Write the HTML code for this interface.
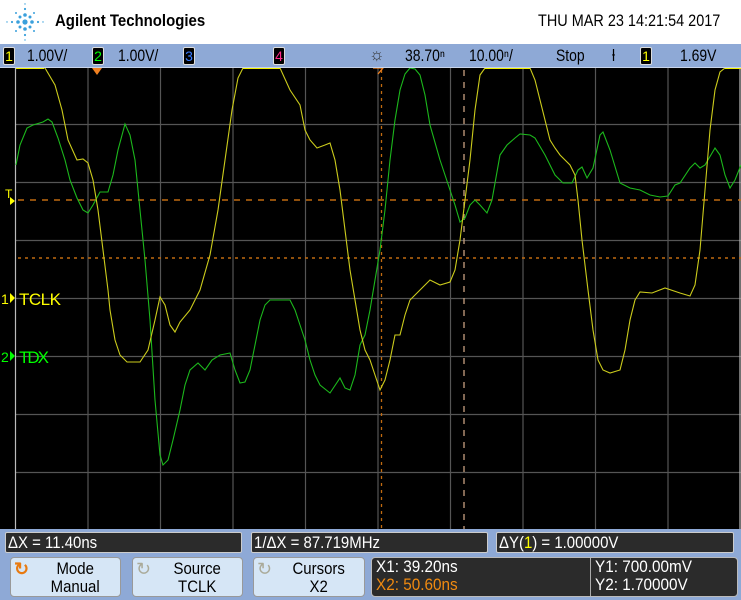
<!DOCTYPE html>
<html><head><meta charset="utf-8"><style>
*{margin:0;padding:0;box-sizing:border-box}
body{width:741px;height:600px;overflow:hidden;background:#fff;font-family:"Liberation Sans",sans-serif;position:relative}
.a{position:absolute;white-space:nowrap}
.hb{position:absolute;left:0;top:44px;width:741px;height:24px;background:#8ea9d6;border-bottom:1px solid #c8d4ea}
.t{font-size:17px;color:#000;transform:scaleX(.82);transform-origin:left}
.cb{position:absolute;top:47px;width:12px;height:18px;background:#000;border:1px solid #ddd;border-radius:2px;font-size:14px;line-height:16px;text-align:center}
.bp{position:absolute;left:0;top:529px;width:741px;height:71px;background:#8ea9d6}
.box{position:absolute;top:532px;height:21px;background:#2b2b2b;border:1px solid #ccc;border-radius:2px;color:#fff;font-size:17px;line-height:19px;padding-left:2px}
.box span.s{display:inline-block;transform:scaleX(.88);transform-origin:left}
.btn{position:absolute;top:557px;height:40px;background:#d6e6f6;border:1px solid #999;border-radius:4px;font-size:17px;line-height:18px;text-align:center;color:#000}
.btn div{transform:scaleX(.88)}
</style></head><body>
<svg class="a" style="left:4px;top:2px" width="42" height="40" viewBox="0 0 42 40">
<g fill="#3aa0dc">
<circle cx="21" cy="20" r="2.6"/>
<circle cx="21" cy="13" r="1.8"/><circle cx="21" cy="27" r="1.8"/><circle cx="14" cy="20" r="1.8"/><circle cx="28" cy="20" r="1.8"/>
<circle cx="16" cy="15" r="1.5"/><circle cx="26" cy="15" r="1.5"/><circle cx="16" cy="25" r="1.5"/><circle cx="26" cy="25" r="1.5"/>
<circle cx="21" cy="7" r="1.1"/><circle cx="21" cy="33" r="1.1"/><circle cx="8" cy="20" r="1.1"/><circle cx="34" cy="20" r="1.1"/>
<circle cx="12" cy="11" r="1"/><circle cx="30" cy="11" r="1"/><circle cx="12" cy="29" r="1"/><circle cx="30" cy="29" r="1"/>
<circle cx="21" cy="2" r=".7"/><circle cx="21" cy="38" r=".7"/><circle cx="3" cy="20" r=".7"/><circle cx="39" cy="20" r=".7"/>
</g></svg>
<div class="a" style="left:55px;top:11px;font-size:17px;font-weight:bold;transform:scaleX(.88);transform-origin:left">Agilent Technologies</div>
<div class="a" style="left:538px;top:11px;font-size:17px;transform:scaleX(.85);transform-origin:left">THU MAR 23 14:21:54 2017</div>
<div class="hb"></div>
<div class="cb" style="left:3px;color:#ff0">1</div>
<div class="a t" style="left:27px;top:46px">1.00V/</div>
<div class="cb" style="left:92px;color:#0f0">2</div>
<div class="a t" style="left:118px;top:46px">1.00V/</div>
<div class="cb" style="left:183px;color:#3a7cff">3</div>
<div class="cb" style="left:273px;color:#ff2a8a">4</div>
<div class="a" style="left:369px;top:45px;font-size:17px;color:#333">☼</div>
<div class="a t" style="left:405px;top:46px">38.70ⁿ</div>
<div class="a t" style="left:469px;top:46px">10.00ⁿ/</div>
<div class="a t" style="left:556px;top:46px">Stop</div>
<div class="a t" style="left:612px;top:46px">ƚ</div>
<div class="cb" style="left:640px;color:#ff0">1</div>
<div class="a t" style="left:680px;top:46px">1.69V</div>
<svg class="a" style="left:0;top:68px" width="741" height="461" viewBox="0 68 741 461">
<rect x="0" y="68" width="741" height="461" fill="#000"/>
<g stroke="#555" stroke-width="1.2">
<line x1="88" y1="68" x2="88" y2="529"/><line x1="160.5" y1="68" x2="160.5" y2="529"/><line x1="233" y1="68" x2="233" y2="529"/><line x1="305.5" y1="68" x2="305.5" y2="529"/><line x1="378" y1="68" x2="378" y2="529"/><line x1="450.5" y1="68" x2="450.5" y2="529"/><line x1="523" y1="68" x2="523" y2="529"/><line x1="595.5" y1="68" x2="595.5" y2="529"/><line x1="668" y1="68" x2="668" y2="529"/>
<line x1="15" y1="124.5" x2="741" y2="124.5"/><line x1="15" y1="182.5" x2="741" y2="182.5"/><line x1="15" y1="240.5" x2="741" y2="240.5"/><line x1="15" y1="298.5" x2="741" y2="298.5"/><line x1="15" y1="356.5" x2="741" y2="356.5"/><line x1="15" y1="414.5" x2="741" y2="414.5"/><line x1="15" y1="472.5" x2="741" y2="472.5"/>
</g>
<line x1="15.5" y1="68" x2="15.5" y2="529" stroke="#bbb" stroke-width="1.2"/>
<line x1="740" y1="68" x2="740" y2="529" stroke="#bbb" stroke-width="1.2"/>
<line x1="18" y1="200" x2="741" y2="200" stroke="#c06a10" stroke-width="1.5" stroke-dasharray="6,6"/>
<line x1="18" y1="258" x2="741" y2="258" stroke="#c06a10" stroke-width="1.5" stroke-dasharray="3,4"/>
<line x1="381.5" y1="70" x2="381.5" y2="529" stroke="#c06a10" stroke-width="1.3" stroke-dasharray="3,4"/>
<line x1="464" y1="70" x2="464" y2="529" stroke="#c8a080" stroke-width="1.3" stroke-dasharray="6,6"/>
<polygon points="92,68 102,68 97,75" fill="#f08020"/>
<polyline points="373,68 383,68 378,74" fill="none" stroke="#f08020" stroke-width="1.3"/>
<polyline fill="none" stroke="#1cb81c" stroke-width="1.1" points="16,165 20,145 27,128 33,125 43,122 48,119 52,122 58,138 65,160 70,180 77,198 83,210 88,213 93,205 100,192 108,192 113,175 118,150 125,124 130,135 135,160 140,210 145,260 150,320 155,400 160,455 163,465 168,460 173,440 180,410 185,385 190,370 198,363 205,370 212,360 220,355 230,353 235,370 240,383 245,382 250,370 255,345 260,320 265,305 270,300 290,300 295,310 300,325 305,340 310,360 315,375 320,385 330,393 340,378 345,388 350,390 355,375 360,345 365,335 370,310 375,280 380,250 385,210 390,160 395,120 400,90 405,74 410,68 415,69 420,75 425,95 430,125 440,160 450,190 455,205 460,222 465,218 470,205 475,200 480,205 487,213 492,200 500,155 507,145 515,138 520,134 530,135 535,138 545,155 555,175 563,183 572,183 578,170 582,167 587,178 593,168 600,135 603,132 610,150 620,183 630,188 640,190 650,195 660,197 668,196 675,185 680,183 690,168 695,163 700,168 705,165 715,148 720,155 725,175 730,188 735,180 741,165"/>
<polyline fill="none" stroke="#cccc1c" stroke-width="1.1" points="16,68 45,68 55,85 62,110 68,140 77,160 83,159 88,163 93,180 98,210 103,250 108,290 110,310 115,340 120,355 127,362 140,362 148,350 155,320 160,297 165,305 170,325 175,332 180,322 190,310 200,290 210,255 218,210 225,160 232,110 238,78 243,68 280,68 290,90 300,105 305,130 310,140 317,148 325,145 330,143 335,160 340,190 345,230 350,270 355,300 360,330 365,350 370,360 375,375 380,390 385,380 390,360 395,335 400,335 405,315 410,300 420,290 430,280 440,285 450,282 455,270 460,240 465,200 470,160 475,110 480,75 485,68 530,68 535,80 540,100 545,120 550,140 555,148 560,155 570,165 575,175 578,200 582,240 588,290 593,330 598,360 603,370 610,373 620,370 625,350 630,320 635,300 640,292 652,293 665,288 680,293 690,296 695,285 700,250 705,190 710,130 715,90 720,72 725,68 741,68"/>
<rect x="16" y="67" width="28" height="2" fill="#ee0"/><rect x="243" y="67" width="37" height="2" fill="#ee0"/><rect x="485" y="67" width="45" height="2" fill="#ee0"/><rect x="725" y="67" width="16" height="2" fill="#ee0"/>
<text x="5" y="198" fill="#ff0" font-size="12" font-family="Liberation Sans">T</text>
<polygon points="10,197 15,201 10,205" fill="#ff0"/>
<text x="1" y="304" fill="#ff0" font-size="14" font-family="Liberation Sans">1</text>
<polygon points="10,293 15,298 10,303" fill="#ff0"/>
<text x="19" y="305" fill="#ff0" font-size="17" font-family="Liberation Sans" textLength="42">TCLK</text>
<text x="1" y="362" fill="#0f0" font-size="14" font-family="Liberation Sans">2</text>
<polygon points="10,351 15,356 10,361" fill="#0f0"/>
<text x="19" y="363" fill="#0f0" font-size="17" font-family="Liberation Sans" textLength="30">TDX</text>
</svg>
<div class="bp"></div>
<div class="box" style="left:5px;width:237px"><span class="s">ΔX = 11.40ns</span></div>
<div class="box" style="left:251px;width:237px"><span class="s">1/ΔX = 87.719MHz</span></div>
<div class="box" style="left:496px;width:238px"><span class="s">ΔY(<span style="color:#ff0">1</span>) = 1.00000V</span></div>
<div class="btn" style="left:10px;width:111px"><div style="padding:2px 0 0 22px">Mode<br>Manual</div></div>
<div class="a" style="left:14px;top:559px;font-size:18px;color:#e87a10;font-weight:bold">↻</div>
<div class="btn" style="left:132px;width:111px"><div style="padding:2px 0 0 22px">Source<br>TCLK</div></div>
<div class="a" style="left:136px;top:559px;font-size:18px;color:#aa9">↻</div>
<div class="btn" style="left:253px;width:112px"><div style="padding:2px 0 0 22px">Cursors<br>X2</div></div>
<div class="a" style="left:257px;top:559px;font-size:18px;color:#aa9">↻</div>
<div class="a" style="left:371px;top:557px;width:367px;height:40px;background:#2b2b2b;border:1px solid #bbb;border-radius:4px"></div>
<div class="a" style="left:590px;top:558px;width:1px;height:38px;background:#aaa"></div>
<div class="a" style="left:376px;top:558px;font-size:17px;line-height:18px;color:#fff;transform:scaleX(.9);transform-origin:left">X1: 39.20ns<br><span style="color:#f08a10">X2: 50.60ns</span></div>
<div class="a" style="left:595px;top:558px;font-size:17px;line-height:18px;color:#fff;transform:scaleX(.9);transform-origin:left">Y1: 700.00mV<br>Y2: 1.70000V</div>
</body></html>
